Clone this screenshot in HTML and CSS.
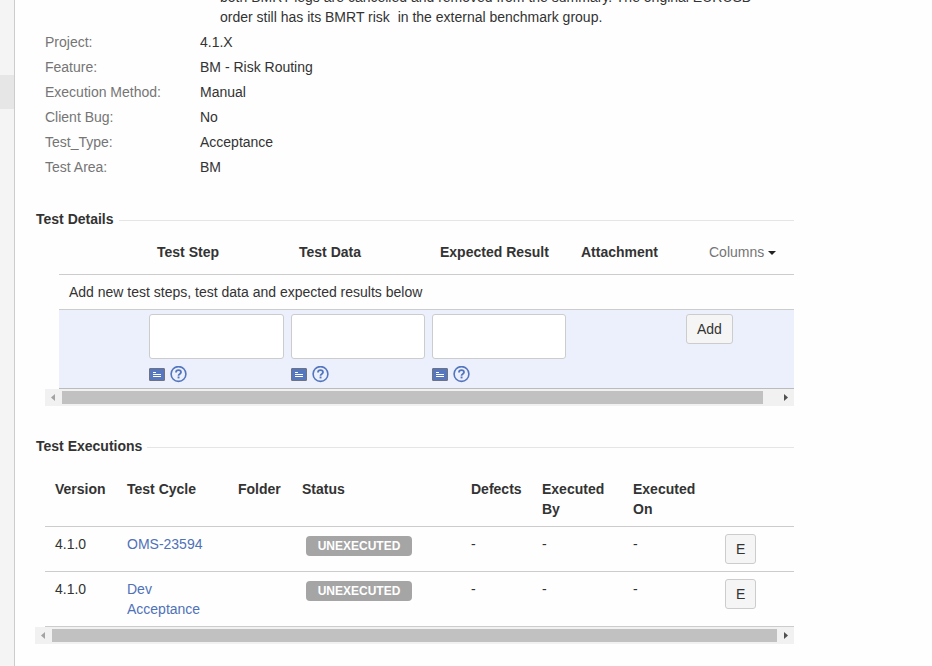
FILE: index.html
```html
<!DOCTYPE html>
<html lang="en">
<head>
<meta charset="utf-8">
<title>Test case</title>
<link rel="stylesheet" href="styles.css">
</head>
<body>
<svg class="sprite" aria-hidden="true">
  <symbol id="wiki" viewBox="0 0 16 13">
    <rect x="0.5" y="0.5" width="15" height="12" rx="0.5" fill="#5677bd" stroke="#6f737c"/>
    <path d="M4 4.5h3M4 6.5h8M4 8.5h8" stroke="#fff" fill="none"/>
  </symbol>
  <symbol id="help" viewBox="0 0 17 17">
    <circle cx="8.5" cy="8" r="7.4" fill="none" stroke="#5375bd" stroke-width="1.6"/>
    <path d="M6 6.500C6 5 7 4.200 8.500 4.200S11 5 11 6.300C11 7.900 8.500 7.900 8.500 9.700" fill="none" stroke="#5375bd" stroke-width="1.8"/>
    <rect x="7.6" y="10.500" width="1.9" height="1.9" fill="#5375bd"/>
  </symbol>
  <symbol id="left" viewBox="0 0 17 17"><path d="M10 5v7L6 8.500z" fill="#a3a3a3"/></symbol>
  <symbol id="right" viewBox="0 0 17 17"><path d="M7 5v7l4-3.500z" fill="#505050"/></symbol>
</svg>
<div class="page">
  <aside class="sidebar"><div class="handle"></div></aside>
  <main class="content">
    <p class="description">both BMRT legs are cancelled and removed from the summary. The original EURUSD order still has its BMRT risk&nbsp; in the external benchmark group.</p>
    <dl class="fields">
      <dt>Project:</dt><dd>4.1.X</dd>
      <dt>Feature:</dt><dd>BM - Risk Routing</dd>
      <dt>Execution Method:</dt><dd>Manual</dd>
      <dt>Client Bug:</dt><dd>No</dd>
      <dt>Test_Type:</dt><dd>Acceptance</dd>
      <dt>Test Area:</dt><dd>BM</dd>
    </dl>

    <section class="section">
      <h2 class="title">Test Details</h2>
      <div class="panel">
        <table class="steps">
          <colgroup><col class="s-no"><col class="s-step"><col class="s-text"><col class="s-text"><col class="s-file"><col></colgroup>
          <thead>
            <tr><th></th><th>Test Step</th><th>Test Data</th><th>Expected Result</th><th>Attachment</th><th class="menu-cell"><button type="button" class="columns">Columns<span class="caret"></span></button></th></tr>
          </thead>
          <tbody>
            <tr class="hint"><td colspan="6">Add new test steps, test data and expected results below</td></tr>
            <tr class="entry">
              <td></td>
              <td><textarea aria-label="Test Step"></textarea><div class="tools"><svg class="wiki"><use href="#wiki"/></svg><svg class="help"><use href="#help"/></svg></div></td>
              <td><textarea aria-label="Test Data"></textarea><div class="tools"><svg class="wiki"><use href="#wiki"/></svg><svg class="help"><use href="#help"/></svg></div></td>
              <td><textarea aria-label="Expected Result"></textarea><div class="tools"><svg class="wiki"><use href="#wiki"/></svg><svg class="help"><use href="#help"/></svg></div></td>
              <td></td>
              <td><button type="button" class="btn">Add</button></td>
            </tr>
          </tbody>
        </table>
        <div class="scrollbar"><svg class="arrow"><use href="#left"/></svg><div class="thumb thumb-steps"></div><svg class="arrow"><use href="#right"/></svg></div>
      </div>
    </section>

    <section class="section">
      <h2 class="title">Test Executions</h2>
      <div class="panel panel-runs">
        <table class="runs">
          <colgroup><col class="r-version"><col class="r-cycle"><col class="r-folder"><col class="r-status"><col class="r-defects"><col class="r-by"><col class="r-on"><col></colgroup>
          <thead>
            <tr><th>Version</th><th>Test Cycle</th><th>Folder</th><th>Status</th><th>Defects</th><th>Executed By</th><th>Executed On</th><th></th></tr>
          </thead>
          <tbody>
            <tr><td>4.1.0</td><td><a href="#">OMS-23594</a></td><td></td><td><span class="badge">UNEXECUTED</span></td><td>-</td><td>-</td><td>-</td><td><button type="button" class="btn">E</button></td></tr>
            <tr><td>4.1.0</td><td><a href="#">Dev Acceptance</a></td><td></td><td><span class="badge">UNEXECUTED</span></td><td>-</td><td>-</td><td>-</td><td><button type="button" class="btn">E</button></td></tr>
          </tbody>
        </table>
        <div class="scrollbar scrollbar-runs"><svg class="arrow"><use href="#left"/></svg><div class="thumb"></div><svg class="arrow"><use href="#right"/></svg></div>
      </div>
    </section>
  </main>
</div>
</body>
</html>
```
FILE: styles.css
```css
* { box-sizing: border-box; }
body {
  margin: 0;
  background: #fefefe;
  color: #333;
  font: 14px/20px Arial, "Liberation Sans", sans-serif;
}
.sprite { display: none; }
.page { display: flex; min-height: 100vh; overflow: hidden; }
.sidebar {
  flex: none;
  width: 15px;
  padding-top: 75px;
  background: #f4f4f4;
  border-right: 1px solid #ccc;
}
.handle { height: 34px; background: #e6e6e6; }
.content { flex: 1; min-width: 0; padding: 0 138px 0 21px; }

.description { margin: -13px 20px 5px 184px; }
.fields {
  display: grid;
  grid-template-columns: 155px 1fr;
  row-gap: 5px;
  margin: 0 0 0 9px;
}
.fields dt { color: #757575; }
.fields dd { margin: 0; }

.section { margin-top: 32px; }
.section + .section { margin-top: 30px; }
.title {
  display: flex;
  align-items: center;
  gap: 5px;
  margin: 0;
  font-size: 14px;
  line-height: 20px;
}
.title::after { content: ""; flex: 1; margin-top: 2px; border-top: 1px solid #e5e5e5; }
.panel { margin-left: 9px; }
.panel-runs { padding-top: 16px; }

table { border-collapse: separate; border-spacing: 0; table-layout: fixed; width: 100%; }
th, td { text-align: left; vertical-align: top; border-bottom: 1px solid #ccc; }

.steps { width: calc(100% - 14px); margin-left: 14px; }
.steps th { padding: 13px 0 12px 8px; }
.steps td { padding: 0; }
.steps .menu-cell { padding-left: 23px; }
.s-no { width: 90px; }
.s-step { width: 142px; }
.s-text { width: 141px; }
.s-file { width: 113px; }
.steps .hint td { padding: 7px 10px; }
.entry { background: #ecf0fd; }
.steps .entry td { padding: 4px 7px 5px 0; border-bottom-color: #bbb; }
textarea {
  display: block;
  width: 100%;
  height: 45px;
  border: 1px solid #ccc;
  border-radius: 3px;
  background: #fff;
  font: inherit;
  resize: none;
}
.tools { display: flex; align-items: center; gap: 5px; margin-top: 7px; }
.wiki { width: 16px; height: 13px; }
.help { width: 17px; height: 17px; }

.columns {
  display: flex;
  align-items: center;
  gap: 4px;
  padding: 0;
  border: 0;
  background: none;
  color: #757575;
  font: inherit;
  font-weight: normal;
}
.caret { border: 4px solid transparent; border-top-color: #222; border-bottom: 0; margin-top: 2px; }
.btn {
  display: block;
  height: 30px;
  padding: 0 10px;
  border: 1px solid #ccc;
  border-radius: 3px;
  background: #f5f5f5;
  color: #333;
  font: inherit;
}

.runs th, .runs td { padding: 7px 10px; }
.runs th:nth-child(3) { padding-right: 0; }
.r-version { width: 72px; }
.r-cycle { width: 111px; }
.r-folder { width: 64px; }
.r-status { width: 169px; }
.r-defects { width: 71px; }
.r-by { width: 91px; }
.r-on { width: 92px; }
.runs a { color: #4f71b8; text-decoration: none; }
.badge {
  display: block;
  width: 106px;
  margin: 2px 4px 0;
  border-radius: 4px;
  background: #a5a5a5;
  color: #fff;
  font-size: 12px;
  font-weight: bold;
  text-align: center;
}

.scrollbar { display: flex; align-items: center; height: 17px; background: #f1f1f1; }
.scrollbar-runs { margin-left: -10px; }
.arrow { flex: none; width: 17px; height: 17px; }
.thumb { flex: 1; height: 13px; background: #c1c1c1; }
.thumb-steps { margin-right: 14px; }
```
